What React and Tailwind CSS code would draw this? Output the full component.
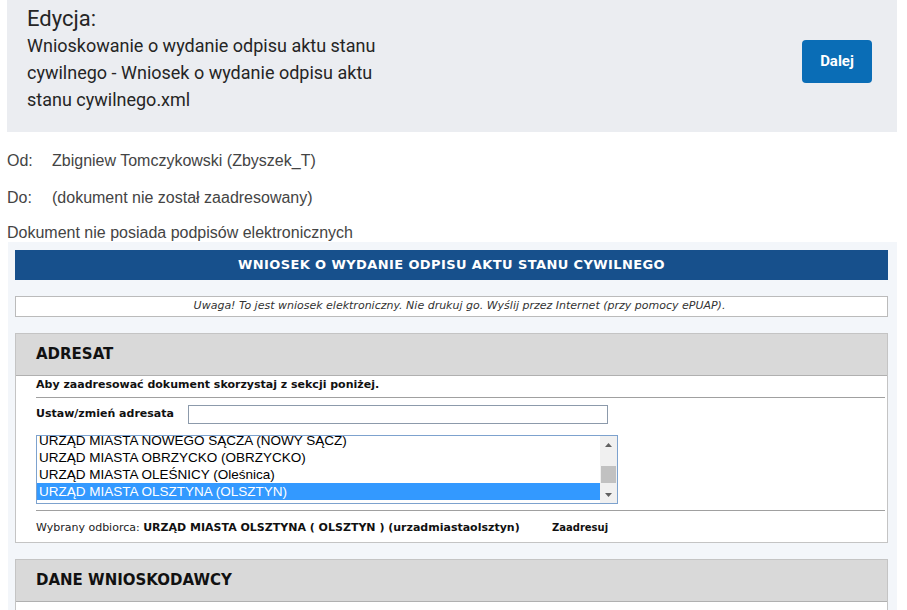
import React from "react";

const verdana = { fontFamily: '"DejaVu Sans", Verdana, sans-serif' };

function ListBox() {
  const opts = [
    "URZĄD MIASTA NOWEGO SĄCZA (NOWY SĄCZ)",
    "URZĄD MIASTA OBRZYCKO (OBRZYCKO)",
    "URZĄD MIASTA OLEŚNICY (Oleśnica)",
    "URZĄD MIASTA OLSZTYNA (OLSZTYN)",
    "URZĄD MIASTA OPOLA (OPOLE)",
  ];
  return (
    <div className="mt-[11px] w-[582px] h-[69px] border border-[#7da2ce] bg-white flex overflow-hidden">
      <div className="flex-1 overflow-hidden">
        <div className="-mt-[4px]">
          {opts.map((o, i) => (
            <div
              key={o}
              className={
                "h-[17px] leading-[17px] pl-[2px] text-[13.5px] whitespace-nowrap " +
                (i === 3 ? "bg-[#3399ff] text-white" : "text-black")
              }
              style={{ fontFamily: '"Liberation Sans", Arial, sans-serif' }}
            >
              {o}
            </div>
          ))}
        </div>
      </div>
      <div className="w-[17px] bg-[#f0f0f0] flex flex-col items-center">
        <div className="h-[17px] flex items-center justify-center">
          <svg width="7" height="4" viewBox="0 0 7 4"><path d="M0 4 L3.5 0 L7 4 Z" fill="#606060" /></svg>
        </div>
        <div className="mt-[13px] w-[15px] h-[17px] bg-[#c1c1c1]" />
        <div className="flex-1" />
        <div className="h-[17px] flex items-center justify-center">
          <svg width="7" height="4" viewBox="0 0 7 4"><path d="M0 0 L3.5 4 L7 0 Z" fill="#606060" /></svg>
        </div>
      </div>
    </div>
  );
}

export default function App() {
  return (
    <div className="w-[907px] h-[610px] overflow-hidden bg-white">
      {/* Top panel */}
      <div
        className="ml-[7px] mr-[10px] h-[132px] bg-[#ebedf1] flex justify-between"
        style={{ fontFamily: 'Roboto, "Noto Sans", sans-serif' }}
      >
        <div className="pl-[20px] pt-[6px] text-[#252525]">
          <div className="text-[22px] leading-[26px]">Edycja:</div>
          <div className="text-[18px] leading-[27px] font-normal w-[385px]">
            Wnioskowanie o wydanie odpisu aktu stanu cywilnego - Wniosek o wydanie odpisu aktu stanu cywilnego.xml
          </div>
        </div>
        <button className="mt-[40px] mr-[25px] w-[70px] h-[43px] rounded-[4px] bg-[#0a6db6] text-white font-bold text-[15px]">
          Dalej
        </button>
      </div>

      {/* Info lines */}
      <div
        className="pl-[7px] text-[16px] text-[#444]"
        style={{ fontFamily: '"Liberation Sans", Arial, sans-serif' }}
      >
        <div className="mt-[20px] flex leading-[18px]">
          <span className="w-[45px]">Od:</span>
          <span>Zbigniew Tomczykowski (Zbyszek_T)</span>
        </div>
        <div className="mt-[19px] flex leading-[18px]">
          <span className="w-[45px]">Do:</span>
          <span>(dokument nie został zaadresowany)</span>
        </div>
        <div className="mt-[17px] leading-[18px]">Dokument nie posiada podpisów elektronicznych</div>
      </div>

      {/* Form panel */}
      <div className="ml-[8px] mr-[10px] bg-[#f3f6fa] pl-[7px] pr-[9px] pt-[8px] h-[400px] text-[#222]" style={verdana}>
        <div className="h-[30px] bg-[#17508c] flex items-center justify-center text-white font-bold text-[13px] tracking-[0.4px]">
          WNIOSEK O WYDANIE ODPISU AKTU STANU CYWILNEGO
        </div>
        <div className="mt-[16px] h-[21px] border border-[#bbbbbb] bg-white flex items-center justify-center pl-[16px] italic text-[11px] text-[#333]">
          Uwaga! To jest wniosek elektroniczny. Nie drukuj go. Wyślij przez Internet (przy pomocy ePUAP).
        </div>

        {/* ADRESAT */}
        <div className="mt-[16px] border border-[#c4c4c4] bg-white">
          <div className="h-[42px] bg-[#d9d9d9] border-b border-[#b0b0b0] flex items-center pl-[20px] text-[15px] font-bold text-[#111]">
            ADRESAT
          </div>
          <div className="pl-[20px] pr-[2px] pt-[2px] pb-[7px]">
            <div className="text-[11px] leading-[14px] font-bold text-[#111]">
              Aby zaadresować dokument skorzystaj z sekcji poniżej.
            </div>
            <div className="mt-[5px] h-px bg-[#a0a0a0]" />
            <div className="mt-[7px] flex items-center h-[19px]">
              <span className="w-[152px] text-[11px] font-bold text-[#111]">Ustaw/zmień adresata</span>
              <div className="w-[420px] h-[19px] border border-[#8c9aab] bg-white" />
            </div>
            <ListBox />
            <div className="mt-[6px] h-px bg-[#a0a0a0]" />
            <div className="mt-[10px] flex items-center text-[11px] leading-[14px] text-[#222]">
              <span className="w-[516px] whitespace-nowrap">
                Wybrany odbiorca: <b className="text-[#111]">URZĄD MIASTA OLSZTYNA ( OLSZTYN ) (urzadmiastaolsztyn)</b>
              </span>
              <b className="text-[10px] text-[#111]">Zaadresuj</b>
            </div>
          </div>
        </div>

        {/* DANE WNIOSKODAWCY */}
        <div className="mt-[16px] border border-[#c4c4c4] bg-white h-[120px]">
          <div className="h-[42px] bg-[#d9d9d9] border-b border-[#b0b0b0] flex items-center pl-[20px] text-[15px] font-bold text-[#111]">
            DANE WNIOSKODAWCY
          </div>
        </div>
      </div>
    </div>
  );
}
